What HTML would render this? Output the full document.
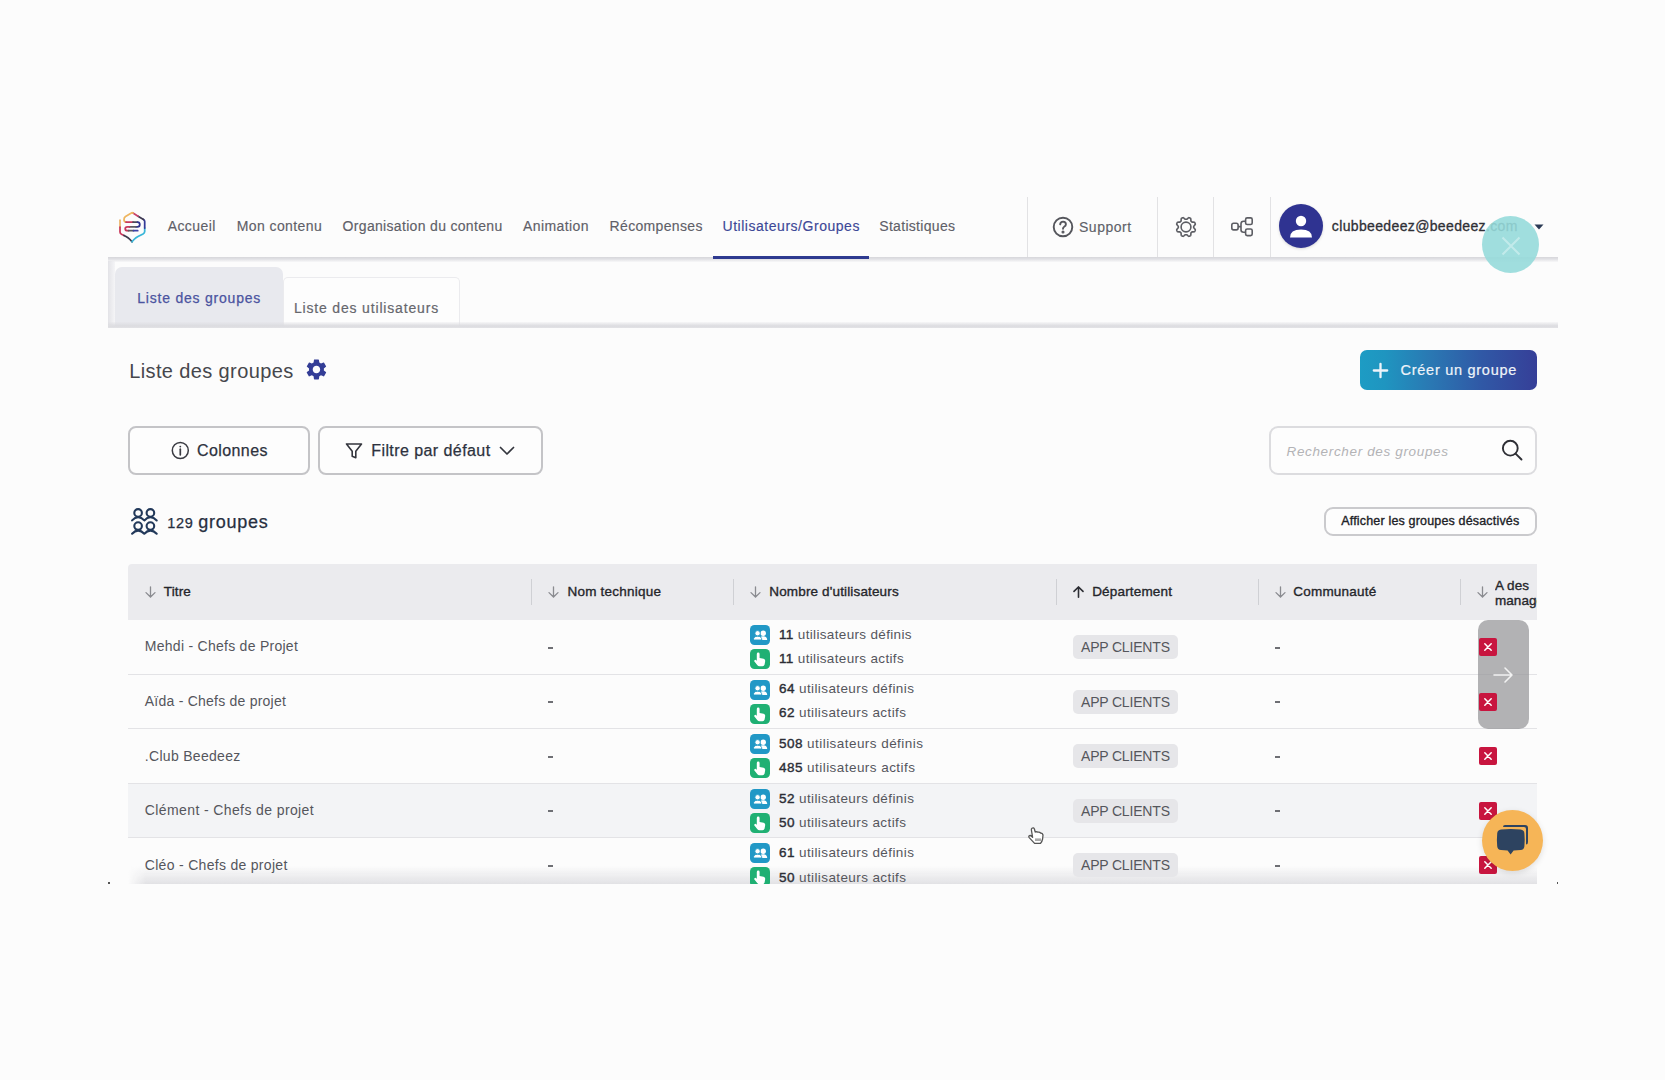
<!DOCTYPE html>
<html><head><meta charset="utf-8">
<style>
*{box-sizing:border-box;margin:0;padding:0}
html,body{width:1665px;height:1080px;background:#fcfcfc;overflow:hidden;font-family:"Liberation Sans",sans-serif;color:#333;position:relative}
.a{position:absolute}
.t{position:absolute;white-space:nowrap;line-height:1}
.nt{position:absolute;white-space:nowrap;line-height:1;top:219.3px;font-size:14px;color:#5f6068;-webkit-text-stroke:0.15px currentColor}
.vd{position:absolute;top:197px;width:1px;height:60px;background:#e2e2e4}
.hs{position:absolute;top:579px;width:1px;height:26px;background:#cfd0d4}
.ht{position:absolute;white-space:nowrap;line-height:1;top:585.4px;font-size:13.5px;font-weight:400;color:#25262b;-webkit-text-stroke:0.35px #25262b}
.ar{position:absolute;top:586px}
.rt{position:absolute;white-space:nowrap;line-height:1;font-size:14px;color:#55565c}
.rs{position:absolute;left:128px;width:1409px;height:1px;background:#e3e3e6}
.dash{position:absolute;width:5px;height:2px;background:#6e6f74}
.ic{position:absolute;left:750px;width:20px;height:20px;border-radius:4.5px}
.blue{background:#2198c6}
.green{background:#1fb073}
.ut{position:absolute;white-space:nowrap;line-height:1;left:779px;font-size:13.5px;color:#55565c}
.ut b{color:#2b2d35;font-weight:400;-webkit-text-stroke:0.4px #2b2d35}
.badge{position:absolute;left:1073px;width:105px;height:24px;border-radius:5px;background:#e6e6e9}
.bt{position:absolute;white-space:nowrap;line-height:1;left:1081px;font-size:14px;color:#55565c;letter-spacing:-0.18px}
.rx{position:absolute;left:1479px;width:18px;height:18px;border-radius:2px;background:#c8153f}
</style></head>
<body>
<!-- ============ NAV ============ -->
<svg class="a" style="left:112px;top:205px" width="40" height="42" viewBox="0 0 40 42" fill="none" stroke-width="1.75" stroke-linecap="round" stroke-linejoin="round">
  <path d="M8 15.2 L8 22" stroke="#ecb56a"/>
  <path d="M8 22 L8 27 Q8 28.5 9.5 29.3 L12 30.5" stroke="#c9385c"/>
  <path d="M12 30.5 L14 31.5 Q16 32.5 18 34.5 L20 36.8" stroke="#3d3c4e"/>
  <path d="M20 36.8 L22 34.5 Q24 32.5 26 31.5 L31 29 Q32.7 28 32.7 26.5 L32.7 23" stroke="#38b6d8"/>
  <path d="M32.7 23 L32.7 16.5 Q32.7 15.2 31.5 14.5" stroke="#333a98"/>
  <path d="M31.5 14.5 L26 11.2" stroke="#3d3850"/>
  <path d="M26 11.2 L21 8" stroke="#c8416a"/>
  <path d="M21 8 Q20.2 7.5 19.4 8 L13.5 11.5 Q12 12.5 12 14.5 Q12 17 14 17" stroke="#eeb660"/>
  <path d="M14 17 L21 17" stroke="#c8385c"/>
  <path d="M21 17 L25.5 17" stroke="#4a4a58"/>
  <path d="M25.5 17 Q27.8 17 27.8 19.5 Q27.8 21.8 25.5 21.8 L24 21.8" stroke="#2f3591"/>
  <path d="M24 21.8 L17.5 21.8" stroke="#5a5b62"/>
  <path d="M17.5 21.8 L15.5 21.8 Q13.2 21.8 13.2 23.7 Q13.2 25.7 15.5 25.7 L16.5 25.7" stroke="#c8385c"/>
  <path d="M16.5 25.7 L21.5 25.7" stroke="#5a5b62"/>
  <path d="M21.5 25.7 L25.7 25.7" stroke="#3b42a8"/>
</svg>
<div class="nt" style="left:167.7px;letter-spacing:0.41px">Accueil</div>
<div class="nt" style="left:236.8px;letter-spacing:0.4px">Mon contenu</div>
<div class="nt" style="left:342.6px;letter-spacing:0.32px">Organisation du contenu</div>
<div class="nt" style="left:523.1px;letter-spacing:0.39px">Animation</div>
<div class="nt" style="left:609.6px;letter-spacing:0.33px">Récompenses</div>
<div class="nt" style="left:722.5px;letter-spacing:0.53px;color:#3d4897">Utilisateurs/Groupes</div>
<div class="nt" style="left:879.3px;letter-spacing:0.3px">Statistiques</div>
<div class="a" style="left:713px;top:256px;width:156px;height:3px;background:#2e3a90"></div>
<div class="vd" style="left:1027px"></div>
<div class="vd" style="left:1157px"></div>
<div class="vd" style="left:1213px"></div>
<div class="vd" style="left:1270px"></div>
<!-- support -->
<svg class="a" style="left:1051px;top:215px" width="24" height="24" viewBox="0 0 24 24" fill="none" stroke="#55565c" stroke-width="1.9" stroke-linecap="round">
  <circle cx="12" cy="12" r="9.3"/>
  <path d="M9.2 9.4 Q9.4 6.6 12.1 6.6 Q14.9 6.7 14.9 9.2 Q14.9 10.8 13.2 11.7 Q12 12.4 12 13.8"/>
  <circle cx="12" cy="17" r="0.6" fill="#55565c"/>
</svg>
<div class="nt" style="left:1079px;top:220.1px;letter-spacing:0.52px;color:#606168">Support</div>
<!-- gear outline -->
<svg class="a" style="left:1173.5px;top:214.5px" width="24" height="24" viewBox="0 0 24 24" fill="none" stroke="#5c5d63" stroke-width="1.6" stroke-linejoin="round">
  <path d="M12.00 4.30 L12.20 4.30 L12.40 4.31 L12.60 4.32 L12.81 4.28 L13.05 4.05 L13.30 3.81 L13.57 3.55 L13.85 3.29 L14.15 3.05 L14.45 2.84 L14.76 2.67 L15.03 2.68 L15.27 2.76 L15.51 2.85 L15.75 2.95 L15.99 3.05 L16.22 3.15 L16.45 3.27 L16.64 3.45 L16.74 3.79 L16.81 4.15 L16.85 4.53 L16.87 4.92 L16.88 5.29 L16.88 5.64 L16.89 5.96 L17.00 6.14 L17.15 6.28 L17.30 6.41 L17.44 6.56 L17.59 6.70 L17.72 6.85 L17.86 7.00 L18.04 7.11 L18.36 7.12 L18.71 7.12 L19.08 7.13 L19.47 7.15 L19.85 7.19 L20.21 7.26 L20.55 7.36 L20.73 7.55 L20.85 7.78 L20.95 8.01 L21.05 8.25 L21.15 8.49 L21.24 8.73 L21.32 8.97 L21.33 9.24 L21.16 9.55 L20.95 9.85 L20.71 10.15 L20.45 10.43 L20.19 10.70 L19.95 10.95 L19.72 11.19 L19.68 11.40 L19.69 11.60 L19.70 11.80 L19.70 12.00 L19.70 12.20 L19.69 12.40 L19.68 12.60 L19.72 12.81 L19.95 13.05 L20.19 13.30 L20.45 13.57 L20.71 13.85 L20.95 14.15 L21.16 14.45 L21.33 14.76 L21.32 15.03 L21.24 15.27 L21.15 15.51 L21.05 15.75 L20.95 15.99 L20.85 16.22 L20.73 16.45 L20.55 16.64 L20.21 16.74 L19.85 16.81 L19.47 16.85 L19.08 16.87 L18.71 16.88 L18.36 16.88 L18.04 16.89 L17.86 17.00 L17.72 17.15 L17.59 17.30 L17.44 17.44 L17.30 17.59 L17.15 17.72 L17.00 17.86 L16.89 18.04 L16.88 18.36 L16.88 18.71 L16.87 19.08 L16.85 19.47 L16.81 19.85 L16.74 20.21 L16.64 20.55 L16.45 20.73 L16.22 20.85 L15.99 20.95 L15.75 21.05 L15.51 21.15 L15.27 21.24 L15.03 21.32 L14.76 21.33 L14.45 21.16 L14.15 20.95 L13.85 20.71 L13.57 20.45 L13.30 20.19 L13.05 19.95 L12.81 19.72 L12.60 19.68 L12.40 19.69 L12.20 19.70 L12.00 19.70 L11.80 19.70 L11.60 19.69 L11.40 19.68 L11.19 19.72 L10.95 19.95 L10.70 20.19 L10.43 20.45 L10.15 20.71 L9.85 20.95 L9.55 21.16 L9.24 21.33 L8.97 21.32 L8.73 21.24 L8.49 21.15 L8.25 21.05 L8.01 20.95 L7.78 20.85 L7.55 20.73 L7.36 20.55 L7.26 20.21 L7.19 19.85 L7.15 19.47 L7.13 19.08 L7.12 18.71 L7.12 18.36 L7.11 18.04 L7.00 17.86 L6.85 17.72 L6.70 17.59 L6.56 17.44 L6.41 17.30 L6.28 17.15 L6.14 17.00 L5.96 16.89 L5.64 16.88 L5.29 16.88 L4.92 16.87 L4.53 16.85 L4.15 16.81 L3.79 16.74 L3.45 16.64 L3.27 16.45 L3.15 16.22 L3.05 15.99 L2.95 15.75 L2.85 15.51 L2.76 15.27 L2.68 15.03 L2.67 14.76 L2.84 14.45 L3.05 14.15 L3.29 13.85 L3.55 13.57 L3.81 13.30 L4.05 13.05 L4.28 12.81 L4.32 12.60 L4.31 12.40 L4.30 12.20 L4.30 12.00 L4.30 11.80 L4.31 11.60 L4.32 11.40 L4.28 11.19 L4.05 10.95 L3.81 10.70 L3.55 10.43 L3.29 10.15 L3.05 9.85 L2.84 9.55 L2.67 9.24 L2.68 8.97 L2.76 8.73 L2.85 8.49 L2.95 8.25 L3.05 8.01 L3.15 7.78 L3.27 7.55 L3.45 7.36 L3.79 7.26 L4.15 7.19 L4.53 7.15 L4.92 7.13 L5.29 7.12 L5.64 7.12 L5.96 7.11 L6.14 7.00 L6.28 6.85 L6.41 6.70 L6.56 6.56 L6.70 6.41 L6.85 6.28 L7.00 6.14 L7.11 5.96 L7.12 5.64 L7.12 5.29 L7.13 4.92 L7.15 4.53 L7.19 4.15 L7.26 3.79 L7.36 3.45 L7.55 3.27 L7.78 3.15 L8.01 3.05 L8.25 2.95 L8.49 2.85 L8.73 2.76 L8.97 2.68 L9.24 2.67 L9.55 2.84 L9.85 3.05 L10.15 3.29 L10.43 3.55 L10.70 3.81 L10.95 4.05 L11.19 4.28 L11.40 4.32 L11.60 4.31 L11.80 4.30 Z"/>
  <circle cx="12" cy="12" r="4.9"/>
</svg>
<!-- hierarchy icon -->
<svg class="a" style="left:1229px;top:215px" width="26" height="24" viewBox="0 0 26 24" fill="none" stroke="#5c5d63" stroke-width="1.6" stroke-linejoin="round">
  <rect x="2.8" y="8.3" width="6.3" height="6.6" rx="1.8"/>
  <rect x="16.6" y="2.9" width="6.6" height="6.6" rx="1.6"/>
  <rect x="16.6" y="14" width="6.6" height="6.6" rx="1.6"/>
  <path d="M9.1 11.6 H12 M16.6 6.2 H14.6 Q12 6.2 12 8.8 V14.8 Q12 17.3 14.6 17.3 H16.6"/>
</svg>
<!-- avatar -->
<div class="a" style="left:1279px;top:204px;width:44px;height:44px;border-radius:50%;background:#2f3391;box-shadow:0 1px 3px rgba(0,0,0,0.15)"></div>
<svg class="a" style="left:1279px;top:204px" width="44" height="44" viewBox="0 0 44 44">
  <circle cx="22" cy="17" r="5.2" fill="#fff"/>
  <path d="M11 33.5 Q11 25.5 22 25.5 Q33 25.5 33 33.5 Z" fill="#fff"/>
</svg>
<div class="nt" style="left:1331.8px;top:219.3px;letter-spacing:0.36px;color:#2f3036;-webkit-text-stroke:0.3px #2f3036">clubbeedeez@beedeez.com</div>
<svg class="a" style="left:1534px;top:224px" width="10" height="6" viewBox="0 0 10 6"><path d="M0.5 0.5 L9.5 0.5 L5 5.5 Z" fill="#2b3a55"/></svg>
<!-- nav bottom shadow -->
<div class="a" style="left:108px;top:256.5px;width:1450px;height:5px;background:linear-gradient(#d6d6da,#e2e2e6 45%,rgba(240,240,242,0.3))"></div>
<div class="a" style="left:713px;top:256px;width:156px;height:3px;background:#2e3a90"></div>

<!-- ============ TABS ============ -->
<div class="a" style="left:108px;top:261px;width:7px;height:64px;background:linear-gradient(90deg,#e3e3e7,rgba(240,240,243,0.6))"></div>
<div class="a" style="left:115px;top:267px;width:168px;height:60px;border-radius:7px 7px 0 0;background:#e8e9ee"></div>
<div class="a" style="left:283px;top:277px;width:177px;height:50px;border-radius:5px 5px 0 0;border:1px solid #ebebee;border-bottom:none;background:#fdfdfd"></div>
<div class="t" style="left:137.2px;top:290.8px;font-size:14px;letter-spacing:0.79px;color:#4b54a0;-webkit-text-stroke:0.25px #4b54a0">Liste des groupes</div>
<div class="t" style="left:293.9px;top:301.3px;font-size:14px;letter-spacing:0.83px;color:#66676d;-webkit-text-stroke:0.2px #66676d">Liste des utilisateurs</div>
<div class="a" style="left:108px;top:322px;width:1450px;height:6px;background:linear-gradient(rgba(225,225,229,0.2),#dcdce0 65%,#e2e2e5)"></div>

<!-- ============ TITLE ROW ============ -->
<div class="t" style="left:129.2px;top:360.8px;font-size:20px;letter-spacing:0.38px;color:#46474c">Liste des groupes</div>
<svg class="a" style="left:303.7px;top:357.4px" width="24.9" height="24.9" viewBox="0 0 24 24">
  <path fill="#333d96" fill-rule="evenodd" d="M19.14 12.94c.04-.3.06-.61.06-.94 0-.32-.02-.64-.07-.94l2.03-1.58a.49.49 0 0 0 .12-.61l-1.92-3.32a.49.49 0 0 0-.59-.22l-2.39.96c-.5-.38-1.03-.7-1.62-.94l-.36-2.54a.48.48 0 0 0-.48-.41h-3.84c-.24 0-.43.17-.47.41l-.36 2.54c-.59.24-1.13.57-1.62.94l-2.39-.96a.48.48 0 0 0-.59.22L2.74 8.87c-.12.21-.08.47.12.61l2.03 1.58c-.05.3-.09.63-.09.94s.02.64.07.94l-2.03 1.58a.49.49 0 0 0-.12.61l1.92 3.32c.12.22.37.29.59.22l2.39-.96c.5.38 1.03.7 1.62.94l.36 2.54c.05.24.24.41.48.41h3.84c.24 0 .44-.17.47-.41l.36-2.54c.59-.24 1.13-.56 1.62-.94l2.39.96c.22.08.47 0 .59-.22l1.92-3.32c.12-.22.07-.47-.12-.61l-2.01-1.58zM12 15.6c-1.98 0-3.6-1.62-3.6-3.6s1.62-3.6 3.6-3.6 3.6 1.62 3.6 3.6-1.62 3.6-3.6 3.6z"/>
</svg>
<div class="a" style="left:1360px;top:350px;width:177px;height:40px;border-radius:7px;background:linear-gradient(90deg,#1d9cc4 0%,#1f95c0 14%,#2a78b3 40%,#3059a6 68%,#363f98 100%)"></div>
<svg class="a" style="left:1372px;top:362px" width="17" height="17" viewBox="0 0 17 17"><path d="M8.5 1.8 V15.2 M1.8 8.5 H15.2" stroke="#eef4fa" stroke-width="2.3" stroke-linecap="round"/></svg>
<div class="t" style="left:1400.6px;top:362.8px;font-size:14.5px;letter-spacing:0.72px;color:#eef3f9;-webkit-text-stroke:0.2px #eef3f9">Créer un groupe</div>

<!-- ============ FILTER ROW ============ -->
<div class="a" style="left:128px;top:426px;width:182px;height:49px;border-radius:8px;border:2px solid #c4c4c7;background:#fdfdfd"></div>
<svg class="a" style="left:170px;top:440px" width="21" height="21" viewBox="0 0 21 21" fill="none" stroke="#3a3b42" stroke-width="1.5">
  <circle cx="10.3" cy="10.5" r="8"/>
  <path d="M10.3 9.2 V14.8" stroke-linecap="round" stroke-width="1.7"/>
  <circle cx="10.3" cy="6.6" r="0.9" fill="#3a3b42" stroke="none"/>
</svg>
<div class="t" style="left:196.9px;top:442.5px;font-size:16px;letter-spacing:0.43px;color:#2d323e;-webkit-text-stroke:0.25px #2d323e">Colonnes</div>
<div class="a" style="left:318px;top:426px;width:225px;height:49px;border-radius:8px;border:2px solid #c4c4c7;background:#fdfdfd"></div>
<svg class="a" style="left:345px;top:442px" width="18" height="18" viewBox="0 0 18 18" fill="none" stroke="#33353d" stroke-width="1.6" stroke-linejoin="round">
  <path d="M1.5 2 H16.5 L10.8 9.2 V15.8 L7.2 14.2 V9.2 Z"/>
</svg>
<div class="t" style="left:371.2px;top:442.5px;font-size:16px;letter-spacing:0.43px;color:#2d323e;-webkit-text-stroke:0.25px #2d323e">Filtre par défaut</div>
<svg class="a" style="left:499px;top:446px" width="16" height="10" viewBox="0 0 16 10" fill="none" stroke="#33353d" stroke-width="1.7" stroke-linecap="round" stroke-linejoin="round"><path d="M1.5 1.5 L8 8 L14.5 1.5"/></svg>

<div class="a" style="left:1269px;top:426px;width:268px;height:49px;border-radius:9px;border:2px solid #dcdcdf;background:#fdfdfd"></div>
<div class="t" style="left:1286.5px;top:445.4px;font-size:13.5px;font-style:italic;letter-spacing:0.65px;color:#b3b3b6">Rechercher des groupes</div>
<svg class="a" style="left:1500px;top:438px" width="25" height="25" viewBox="0 0 25 25" fill="none" stroke="#2e2f35" stroke-width="1.9" stroke-linecap="round">
  <circle cx="10.3" cy="10.2" r="7.4"/>
  <path d="M15.8 15.8 L21.5 21.5"/>
</svg>

<!-- ============ COUNT ROW ============ -->
<svg class="a" style="left:128px;top:505px" width="34" height="34" viewBox="0 0 34 34" fill="none" stroke="#22395a" stroke-width="2.1" stroke-linecap="round" stroke-linejoin="round">
  <circle cx="10.1" cy="7.9" r="3.8"/><circle cx="22.4" cy="7.9" r="3.8"/>
  <path d="M4.1 15.4 Q7 12.3 10.1 12.3 Q13.4 12.3 16.3 15.4 Q19.3 12.3 22.4 12.3 Q25.7 12.3 28.7 15.4"/>
  <circle cx="10.1" cy="21.1" r="3.8"/><circle cx="22.4" cy="21.1" r="3.8"/>
  <path d="M4.1 28.7 Q7 25.6 10.1 25.6 Q13.4 25.6 16.3 28.7 Q19.3 25.6 22.4 25.6 Q25.7 25.6 28.7 28.7"/>
</svg>
<div class="t" style="left:167.3px;top:512.8px;font-size:18px;color:#272f40;-webkit-text-stroke:0.25px #272f40"><span style="font-size:14.5px;letter-spacing:0.6px">129</span> <span style="letter-spacing:0.72px">groupes</span></div>
<div class="a" style="left:1324px;top:506.5px;width:213px;height:29px;border-radius:9px;border:2px solid #cacacd;background:#fdfdfd"></div>
<div class="t" style="left:1341.3px;top:514.7px;font-size:12.5px;-webkit-text-stroke:0.35px #202126;letter-spacing:0.17px;color:#202126">Afficher les groupes désactivés</div>

<!-- ============ TABLE ============ -->
<div class="a" style="left:128px;top:564px;width:1409px;height:56px;border-radius:4px 0 0 0;background:#ebebee"></div>
<div class="hs" style="left:531px"></div>
<div class="hs" style="left:733px"></div>
<div class="hs" style="left:1056px"></div>
<div class="hs" style="left:1258px"></div>
<div class="hs" style="left:1460px"></div>

<svg class="ar" style="left:144px" width="13" height="12" viewBox="0 0 13 12" fill="none" stroke="#8a8b90" stroke-width="1.3" stroke-linecap="round"><path d="M6.5 0.8 V11 M2 6.6 L6.5 11 L11 6.6"/></svg>
<div class="ht" style="left:163.8px;letter-spacing:0.12px">Titre</div>
<svg class="ar" style="left:547px" width="13" height="12" viewBox="0 0 13 12" fill="none" stroke="#8a8b90" stroke-width="1.3" stroke-linecap="round"><path d="M6.5 0.8 V11 M2 6.6 L6.5 11 L11 6.6"/></svg>
<div class="ht" style="left:567.4px;letter-spacing:0.24px">Nom technique</div>
<svg class="ar" style="left:749px" width="13" height="12" viewBox="0 0 13 12" fill="none" stroke="#8a8b90" stroke-width="1.3" stroke-linecap="round"><path d="M6.5 0.8 V11 M2 6.6 L6.5 11 L11 6.6"/></svg>
<div class="ht" style="left:769.3px;letter-spacing:0.15px">Nombre d'utilisateurs</div>
<svg class="ar" style="left:1072px" width="13" height="12" viewBox="0 0 13 12" fill="none" stroke="#2d2e34" stroke-width="1.6" stroke-linecap="round"><path d="M6.5 11.2 V1 M2 5.4 L6.5 1 L11 5.4"/></svg>
<div class="ht" style="left:1092.2px;letter-spacing:0.17px">Département</div>
<svg class="ar" style="left:1274px" width="13" height="12" viewBox="0 0 13 12" fill="none" stroke="#8a8b90" stroke-width="1.3" stroke-linecap="round"><path d="M6.5 0.8 V11 M2 6.6 L6.5 11 L11 6.6"/></svg>
<div class="ht" style="left:1293.3px;letter-spacing:0.2px">Communauté</div>
<svg class="ar" style="left:1476px" width="13" height="12" viewBox="0 0 13 12" fill="none" stroke="#8a8b90" stroke-width="1.3" stroke-linecap="round"><path d="M6.5 0.8 V11 M2 6.6 L6.5 11 L11 6.6"/></svg>
<div class="a" style="left:1495px;top:574px;width:42px;height:40px;overflow:hidden">
  <div class="t" style="left:0;top:4.5px;font-size:13.5px;-webkit-text-stroke:0.35px #25262b;letter-spacing:0.05px;color:#25262b">A des</div>
  <div class="t" style="left:0;top:19.5px;font-size:13.5px;-webkit-text-stroke:0.35px #25262b;letter-spacing:0.05px;color:#25262b">managers</div>
</div>

<!-- rows -->
<div class="a" style="left:128px;top:783px;width:1409px;height:55px;background:#f3f4f6"></div>
<!-- bottom fade -->
<div class="a" style="left:128px;top:866px;width:1409px;height:18px;background:linear-gradient(rgba(228,228,231,0),rgba(228,228,231,0.55) 50%,#e2e2e5);-webkit-mask-image:linear-gradient(90deg,transparent,#000 18px)"></div>
<div class="rs" style="top:674px"></div>
<div class="rs" style="top:728px"></div>
<div class="rs" style="top:783px"></div>
<div class="rs" style="top:837px"></div>

<div class="rt" style="left:144.8px;top:639.4px;letter-spacing:0.27px">Mehdi - Chefs de Projet</div>
<div class="rt" style="left:144.8px;top:693.8px;letter-spacing:0.23px">Aïda - Chefs de projet</div>
<div class="rt" style="left:144.8px;top:748.9px;letter-spacing:0.3px">.Club Beedeez</div>
<div class="rt" style="left:144.8px;top:803.1px;letter-spacing:0.39px">Clément - Chefs de projet</div>
<div class="rt" style="left:144.8px;top:858.1px;letter-spacing:0.3px">Cléo - Chefs de projet</div>

<div class="dash" style="left:548px;top:647px"></div>
<div class="dash" style="left:548px;top:701px"></div>
<div class="dash" style="left:548px;top:756px"></div>
<div class="dash" style="left:548px;top:810px"></div>
<div class="dash" style="left:548px;top:865px"></div>
<div class="dash" style="left:1275px;top:647px"></div>
<div class="dash" style="left:1275px;top:701px"></div>
<div class="dash" style="left:1275px;top:756px"></div>
<div class="dash" style="left:1275px;top:810px"></div>
<div class="dash" style="left:1275px;top:865px"></div>

<!-- users column -->
<svg width="0" height="0" style="position:absolute">
  <defs>
    <g id="ppl"><circle cx="13.2" cy="8.3" r="2.7" fill="#fff"/><path d="M9 15 Q9 11.2 13.2 11.2 Q17.2 11.2 17.2 15 Z" fill="#fff"/><circle cx="7.6" cy="8.3" r="2.7" fill="#fff" stroke="#2198c6" stroke-width="0.9"/><path d="M3.4 15 Q3.4 11.2 7.6 11.2 Q11.8 11.2 11.8 15 Z" fill="#fff" stroke="#2198c6" stroke-width="0.9"/></g>
    <g id="hand"><path d="M8.2 3.6 Q9.6 3.6 9.6 5 V9 L13.6 9.8 Q15.4 10.2 15.2 12 L14.6 15.4 Q14.2 17.2 12.4 17.2 H9.4 Q8.2 17.2 7.4 16.3 L4.4 12.6 Q3.8 11.6 4.8 11 Q5.6 10.6 6.4 11.4 L6.8 11.8 V5 Q6.8 3.6 8.2 3.6 Z" fill="#fff"/></g>
  </defs>
</svg>

<div class="ic blue" style="top:625px"><svg width="20" height="20"><use href="#ppl"/></svg></div>
<div class="ic green" style="top:649px"><svg width="20" height="20"><use href="#hand"/></svg></div>
<div class="ut" style="top:627.8px;letter-spacing:0.34px"><b>11</b> utilisateurs définis</div>
<div class="ut" style="top:651.8px;letter-spacing:0.34px"><b>11</b> utilisateurs actifs</div>

<div class="ic blue" style="top:679.5px"><svg width="20" height="20"><use href="#ppl"/></svg></div>
<div class="ic green" style="top:703.5px"><svg width="20" height="20"><use href="#hand"/></svg></div>
<div class="ut" style="top:682.3px;letter-spacing:0.4px"><b>64</b> utilisateurs définis</div>
<div class="ut" style="top:706.3px;letter-spacing:0.4px"><b>62</b> utilisateurs actifs</div>

<div class="ic blue" style="top:734px"><svg width="20" height="20"><use href="#ppl"/></svg></div>
<div class="ic green" style="top:758px"><svg width="20" height="20"><use href="#hand"/></svg></div>
<div class="ut" style="top:737.1px;letter-spacing:0.45px"><b>508</b> utilisateurs définis</div>
<div class="ut" style="top:761.1px;letter-spacing:0.45px"><b>485</b> utilisateurs actifs</div>

<div class="ic blue" style="top:788.5px"><svg width="20" height="20"><use href="#ppl"/></svg></div>
<div class="ic green" style="top:812.5px"><svg width="20" height="20"><use href="#hand"/></svg></div>
<div class="ut" style="top:791.9px;letter-spacing:0.4px"><b>52</b> utilisateurs définis</div>
<div class="ut" style="top:816.4px;letter-spacing:0.4px"><b>50</b> utilisateurs actifs</div>

<div class="ic blue" style="top:843px"><svg width="20" height="20"><use href="#ppl"/></svg></div>
<div class="ic green" style="top:867px"><svg width="20" height="20"><use href="#hand"/></svg></div>
<div class="ut" style="top:846px;letter-spacing:0.4px"><b>61</b> utilisateurs définis</div>
<div class="ut" style="top:870.5px;letter-spacing:0.4px"><b>50</b> utilisateurs actifs</div>

<!-- badges -->
<div class="badge" style="top:635px"></div><div class="bt" style="top:640.2px">APP CLIENTS</div>
<div class="badge" style="top:689.5px"></div><div class="bt" style="top:694.7px">APP CLIENTS</div>
<div class="badge" style="top:744px"></div><div class="bt" style="top:749.2px">APP CLIENTS</div>
<div class="badge" style="top:798.5px"></div><div class="bt" style="top:803.7px">APP CLIENTS</div>
<div class="badge" style="top:853px"></div><div class="bt" style="top:858.2px">APP CLIENTS</div>

<!-- overlay scroll hint -->
<div class="a" style="left:1478px;top:620px;width:51px;height:109px;border-radius:10px;background:rgba(150,150,152,0.72)"></div>
<svg class="a" style="left:1492px;top:665px" width="22" height="20" viewBox="0 0 22 20" fill="none" stroke="#f2f2f2" stroke-width="1.6" stroke-linecap="round" stroke-linejoin="round"><path d="M2 10 H20 M13 3 L20 10 L13 17"/></svg>

<!-- red x boxes -->
<svg width="0" height="0" style="position:absolute"><defs><g id="xx"><path d="M5.8 5.8 L12.2 12.2 M12.2 5.8 L5.8 12.2" stroke="#fff" stroke-width="1.5" stroke-linecap="round"/></g></defs></svg>
<div class="rx" style="top:638px"><svg width="18" height="18"><use href="#xx"/></svg></div>
<div class="rx" style="top:692.5px"><svg width="18" height="18"><use href="#xx"/></svg></div>
<div class="rx" style="top:747px"><svg width="18" height="18"><use href="#xx"/></svg></div>
<div class="rx" style="top:801.5px"><svg width="18" height="18"><use href="#xx"/></svg></div>
<div class="rx" style="top:856px"><svg width="18" height="18"><use href="#xx"/></svg></div>

<div class="a" style="left:0;top:884px;width:1665px;height:196px;background:#fcfcfc"></div>

<!-- teal close circle -->
<div class="a" style="left:1482px;top:216px;width:57px;height:57px;border-radius:50%;background:rgba(150,218,218,0.9)"></div>
<svg class="a" style="left:1500px;top:235px" width="22" height="22" viewBox="0 0 22 22"><path d="M2.5 2.5 L19.5 19.5 M19.5 2.5 L2.5 19.5" stroke="#c2eaea" stroke-width="2"/></svg>

<!-- chat bubble -->
<div class="a" style="left:1482px;top:810px;width:61px;height:61px;border-radius:50%;background:#f6b557;box-shadow:0 2px 6px rgba(0,0,0,0.12)"></div>
<svg class="a" style="left:1494px;top:822px" width="38" height="38" viewBox="0 0 38 38">
  <path d="M9 4.5 Q9 3 11 3 H31 Q34 3 34 6 V20 Q34 22.5 32 22.5 V7 Q32 5 30 5 H11 Q9 5 9 4.5 Z" fill="#2d4360"/>
  <path d="M7 7.6 Q16.8 6.4 26.6 7.6 Q30.2 8 30.4 11.5 Q31 17.8 30.4 24.2 Q30.1 27.6 26.6 28 L19.6 28.4 L16.6 32.6 L13.6 28.4 L7 28 Q3.5 27.6 3.2 24.2 Q2.6 17.8 3.2 11.5 Q3.5 8 7 7.6 Z" fill="#2d4360"/>
</svg>

<!-- cursor -->
<svg class="a" style="left:1027px;top:826px" width="18" height="19" viewBox="0 0 18 19" fill="#fff" stroke="#555" stroke-width="1.3" stroke-linejoin="round">
  <path d="M5 2.2 Q6.6 1.2 7.4 3 L8.2 6 Q9.8 5.4 11 6.2 Q12.6 5.8 13.6 7 Q15.6 7 16 9 L15.6 13 Q15 16 13.4 17.4 H7.6 L2.2 11.6 Q1.2 10.2 2.6 9.6 Q3.6 9.2 4.8 10.6 L5.6 11.4 L4.4 4 Q4.2 2.8 5 2.2 Z"/>
  <path d="M9 12.4 V15 M11 12.4 V15 M13 12.4 V15" stroke-width="1"/>
</svg>
<div class="a" style="left:108px;top:882px;width:1.5px;height:1.5px;background:#555"></div>
<div class="a" style="left:1556.5px;top:882px;width:1.5px;height:1.5px;background:#555"></div>
</body></html>
